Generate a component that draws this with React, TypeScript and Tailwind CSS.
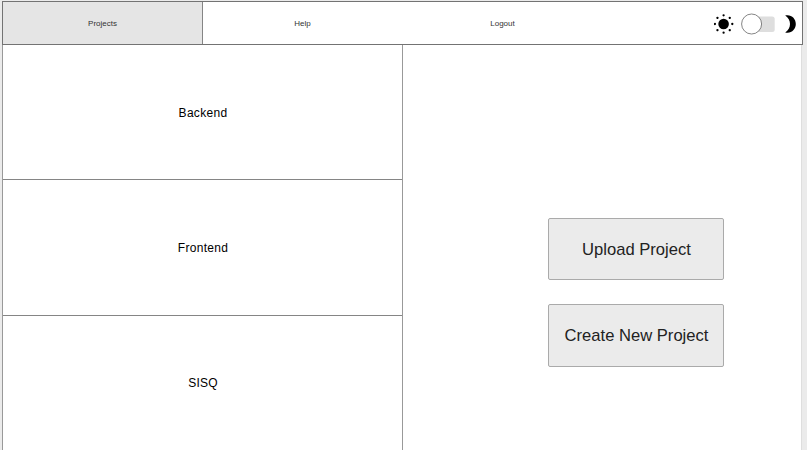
const projects = [
  { name: 'Backend', style: 'h-[135px] border-b pt-px tracking-[0.3px]' },
  { name: 'Frontend', style: 'h-[136px] border-b tracking-[0.3px]' },
  { name: 'SISQ', style: 'h-[134px] pb-px tracking-[0.2px]' },
];

function Sun() {
  return (
    <svg className="block h-5 w-5" viewBox="-9.6 -10 20 20">
      <circle r="5.3" />
      {[0, 45, 90, 135, 180, 225, 270, 315].map((angle) => (
        <circle key={angle} cy="-8.7" r="1.15" transform={`rotate(${angle})`} />
      ))}
    </svg>
  );
}

function Moon() {
  return (
    <svg className="block h-[18px] w-3" viewBox="0 0 12 18">
      <path d="M.2.5C6.4-.8 10.8 3.6 10.8 9S6.4 18.8.2 17.4C3.3 15.4 5 12.3 5 9S3.3 2.5.2.5Z" />
    </svg>
  );
}

function Toggle() {
  return (
    <svg className="block h-[22px] w-[35px]" viewBox="0 0 35 22">
      <rect x="8" y="3.5" width="25.7" height="15.5" rx="2.5" fill="#dedede" />
      <circle cx="10.6" cy="11" r="10" fill="#fff" stroke="#666" strokeWidth="0.8" />
    </svg>
  );
}

function ActionButton({ label, size }: { label: string; size: string }) {
  return (
    <button className={`w-[176px] rounded-[2px] border border-[#aaaaaa] bg-[#ebebeb] pl-px text-[16.6px] text-[#222] ${size}`}>
      {label}
    </button>
  );
}

export default function App() {
  return (
    <div className="h-[450px] w-[807px] overflow-hidden bg-[#ebebeb] pt-px pl-[2px] font-['Liberation_Sans',Arial,sans-serif]">
      <header className="flex h-[44px] w-[801px] border border-[#737373] bg-white text-[8px] text-[#333]">
        <nav className="flex">
          <a className="flex w-[200px] items-center justify-center border-r border-[#858585] bg-[#e5e5e5] pt-px">Projects</a>
          <a className="flex w-[199px] items-center justify-center pt-px">Help</a>
          <a className="flex w-[201px] items-center justify-center pt-px">Logout</a>
        </nav>
        <div className="ml-auto flex items-center pr-[5px] pt-px">
          <Sun />
          <div className="ml-[7px] mr-[9px]"><Toggle /></div>
          <Moon />
        </div>
      </header>
      <main className="flex h-[405px] w-[800px] border-r border-[#dedede] bg-white">
        <section className="w-[401px] border-x border-[#999999]">
          {projects.map((project) => (
            <div key={project.name} className={`flex items-center justify-center border-[#858585] pl-px text-[12px] text-black ${project.style}`}>
              {project.name}
            </div>
          ))}
        </section>
        <aside className="flex flex-col gap-6 pl-[145px] pt-[173px]">
          <ActionButton label="Upload Project" size="h-[62px] pt-[2px]" />
          <ActionButton label="Create New Project" size="h-[63px] pt-[2px]" />
        </aside>
      </main>
    </div>
  );
}
